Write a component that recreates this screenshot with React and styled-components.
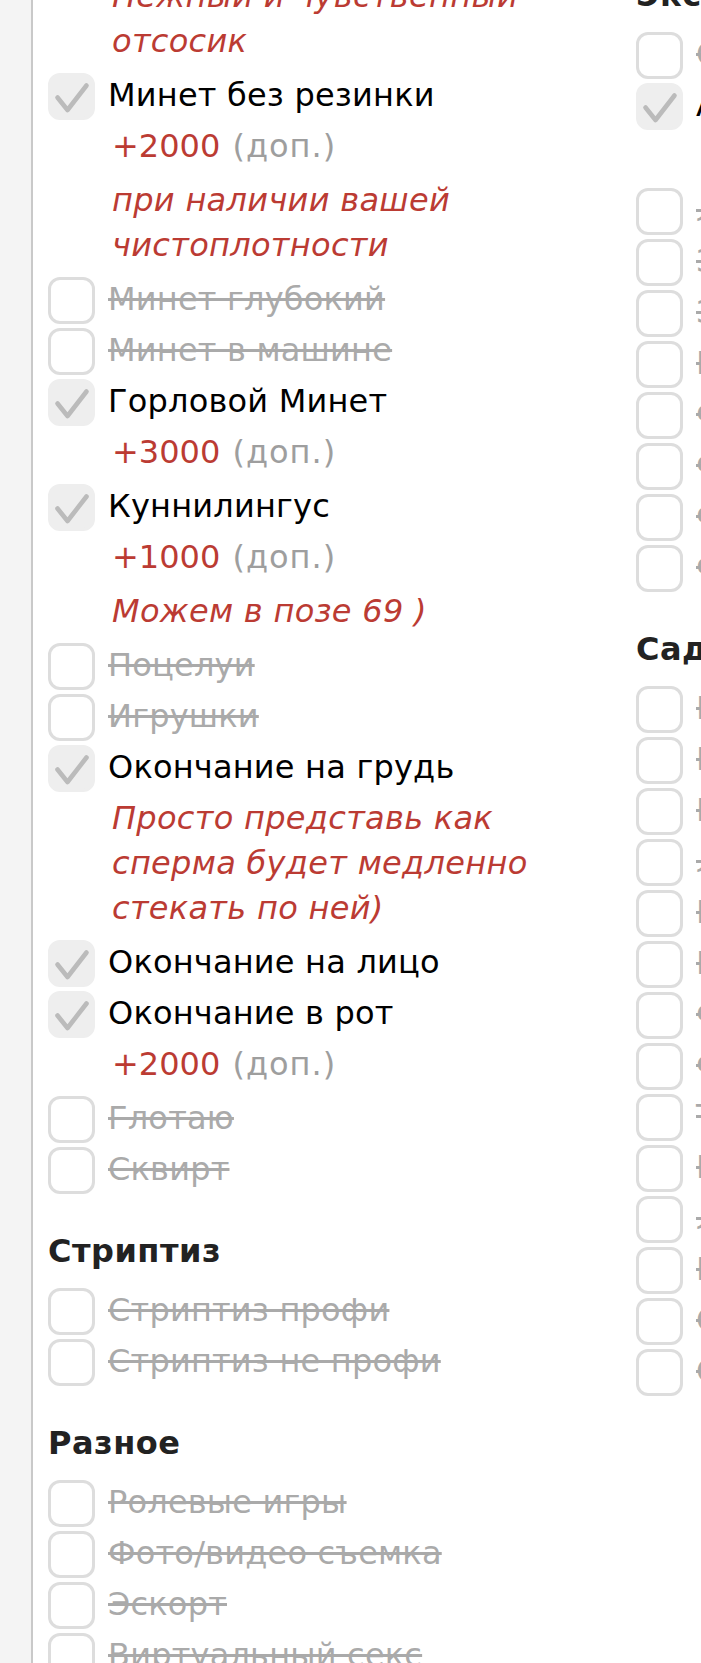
import React from "react";
import styled, { createGlobalStyle } from "styled-components";

const GlobalStyle = createGlobalStyle`
  html, body {
    margin: 0;
    padding: 0;
    background: #ffffff;
  }
  body {
    overflow: hidden;
    font-family: "DejaVu Sans", Verdana, sans-serif;
  }
`;

const Page = styled.div`
  display: flex;
  align-items: stretch;
  min-height: 100vh;
`;

const SideStrip = styled.div`
  flex: none;
  width: 31px;
  background: #f4f4f4;
  border-right: 2px solid #c9c9c9;
`;

const Content = styled.main`
  flex: none;
  padding-left: 15px;
`;

const Columns = styled.div`
  display: grid;
  grid-template-columns: 540px 540px;
  column-gap: 48px;
  align-items: start;
  margin-top: -26px;
`;

const Column = styled.section`
  display: flex;
  flex-direction: column;
  padding-top: ${(p) => p.$offset || 0}px;
`;

const Heading = styled.h3`
  margin: ${(p) => (p.$first ? 0 : 35)}px 0 19px;
  font-size: 32px;
  line-height: 36px;
  font-weight: bold;
  letter-spacing: 0.5px;
  color: #222222;
  white-space: nowrap;
`;

const Row = styled.div`
  display: flex;
  align-items: flex-start;
  gap: 13px;
  margin-bottom: 4px;
`;

const Box = styled.span`
  flex: none;
  box-sizing: border-box;
  width: 47px;
  height: 47px;
  border-radius: 12px;
  background: ${(p) => (p.$checked ? "#eeeeee" : "#ffffff")};
  border: 3px solid ${(p) => (p.$checked ? "#eeeeee" : "#dddddd")};
  display: flex;
  align-items: center;
  justify-content: center;
`;

const Label = styled.span`
  font-size: 32px;
  line-height: 44px;
  letter-spacing: 0.2px;
  white-space: nowrap;
  color: ${(p) => (p.$checked ? "#000000" : "#aaaaaa")};
  text-decoration: ${(p) => (p.$checked ? "none" : "line-through")};
`;

const Price = styled.div`
  padding-left: 64px;
  margin-bottom: 10px;
  font-size: 32px;
  line-height: 44px;
  white-space: nowrap;
`;

const Amount = styled.span`
  color: #bb3b33;
`;

const Extra = styled.span`
  margin-left: 2px;
  letter-spacing: 1px;
  color: #9e9e9e;
`;

const Note = styled.div`
  padding-left: 64px;
  margin-bottom: 9px;
  font-size: 32px;
  line-height: 45px;
  letter-spacing: 0.3px;
  font-style: italic;
  color: #bb3b33;
`;

const Check = () => (
  <svg width="47" height="47" viewBox="0 0 47 47" style={{ margin: -3 }}>
    <path
      d="M9.5 24.5 L19.5 37 L38.5 12.5"
      fill="none"
      stroke="#bbbbbb"
      strokeWidth="4.6"
      strokeLinecap="round"
      strokeLinejoin="round"
    />
  </svg>
);

const Service = ({ name, checked, price, note }) => (
  <>
    <Row>
      <Box $checked={checked}>{checked && <Check />}</Box>
      <Label $checked={checked}>{name}</Label>
    </Row>
    {price && (
      <Price>
        <Amount>+{price}</Amount> <Extra>(доп.)</Extra>
      </Price>
    )}
    {note && <Note>{note}</Note>}
  </>
);

const leftTop = [
  { name: "Минет без резинки", checked: true, price: "2000", note: "при наличии вашей чистоплотности" },
  { name: "Минет глубокий" },
  { name: "Минет в машине" },
  { name: "Горловой Минет", checked: true, price: "3000" },
  { name: "Куннилингус", checked: true, price: "1000", note: "Можем в позе 69 )" },
  { name: "Поцелуи" },
  { name: "Игрушки" },
  { name: "Окончание на грудь", checked: true, note: "Просто представь как сперма будет медленно стекать по ней)" },
  { name: "Окончание на лицо", checked: true },
  { name: "Окончание в рот", checked: true, price: "2000" },
  { name: "Глотаю" },
  { name: "Сквирт" },
];

const strip = [{ name: "Стриптиз профи" }, { name: "Стриптиз не профи" }];

const misc = [
  { name: "Ролевые игры" },
  { name: "Фото/видео съемка" },
  { name: "Эскорт" },
  { name: "Виртуальный секс" },
];

const extreme = [
  { name: "Страпон" },
  { name: "Анилингус", checked: true, price: "2000" },
  { name: "Лесби-шоу откровенное" },
  { name: "Золотой дождь выдача" },
  { name: "Золотой дождь прием" },
  { name: "Копро выдача" },
  { name: "Фистинг анальный" },
  { name: "Фистинг классический" },
  { name: "Фистинг двойной" },
  { name: "Фейсситтинг" },
];

const sado = [
  { name: "Бандаж" },
  { name: "Госпожа" },
  { name: "Рабыня" },
  { name: "Лёгкая доминация" },
  { name: "Порка" },
  { name: "Подчинение" },
  { name: "Фетиш" },
  { name: "Фут-фетиш" },
  { name: "Трамплинг" },
  { name: "Игры с воском" },
  { name: "Лёгкое удушение" },
  { name: "Порка плетью" },
  { name: "Скарификация" },
  { name: "Страпон-доминация" },
];

export default function App() {
  return (
    <>
      <GlobalStyle />
      <Page>
        <SideStrip />
        <Content>
          <Columns>
            <Column>
              <Note>Нежный и чувственный отсосик</Note>
              {leftTop.map((s) => (
                <Service key={s.name} {...s} />
              ))}
              <Heading>Стриптиз</Heading>
              {strip.map((s) => (
                <Service key={s.name} {...s} />
              ))}
              <Heading>Разное</Heading>
              {misc.map((s) => (
                <Service key={s.name} {...s} />
              ))}
            </Column>
            <Column $offset={3}>
              <Heading $first>Экстрим</Heading>
              {extreme.map((s) => (
                <Service key={s.name} {...s} />
              ))}
              <Heading>Садо-мазо</Heading>
              {sado.map((s) => (
                <Service key={s.name} {...s} />
              ))}
            </Column>
          </Columns>
        </Content>
      </Page>
    </>
  );
}
